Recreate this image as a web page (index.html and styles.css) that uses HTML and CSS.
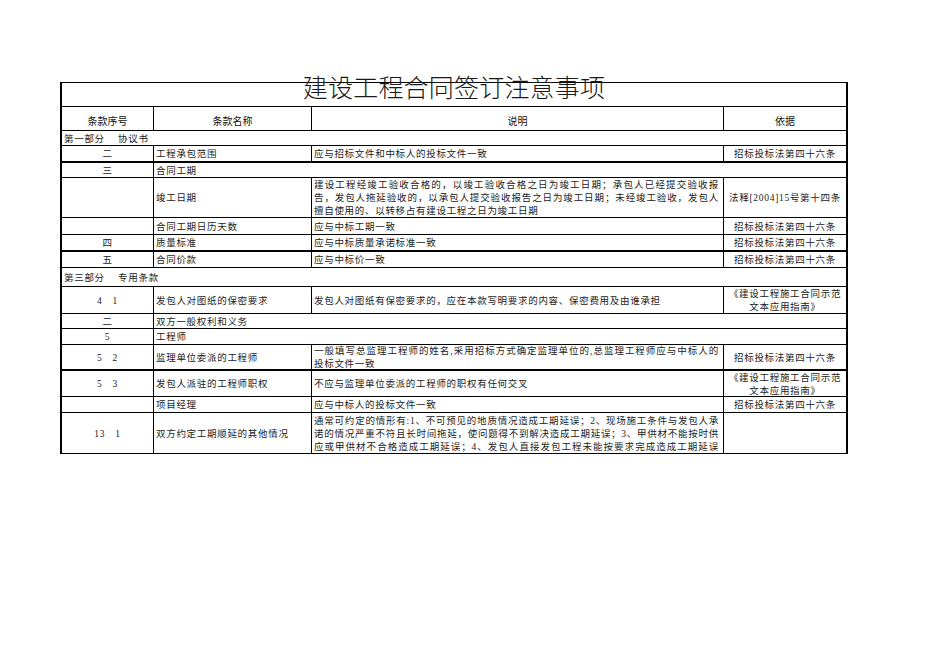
FILE: index.html
```html
<!DOCTYPE html>
<html lang="zh-CN">
<head>
<meta charset="utf-8">
<title>建设工程合同签订注意事项</title>
<link rel="stylesheet" href="styles.css">
</head>
<body>
<div class="page">
  <h1 class="title">建设工程合同签订注意事项</h1>
  <div class="sheet">
    <div class="cell span4"></div>

    <div class="cell hd">条款序号</div>
    <div class="cell hd">条款名称</div>
    <div class="cell hd">说明</div>
    <div class="cell hd last">依据</div>

    <div class="cell span4 sec">第一部分&nbsp;　协议书</div>

    <div class="cell num thick">二</div>
    <div class="cell name thick">工程承包范围</div>
    <div class="cell desc thick">应与招标文件和中标人的投标文件一致</div>
    <div class="cell basis last thick">招标投标法第四十六条</div>

    <div class="cell num">三</div>
    <div class="cell name span3">合同工期</div>

    <div class="cell num"></div>
    <div class="cell name">竣工日期</div>
    <div class="cell desc">
      <div class="lines">
        <span class="jl">建设工程经竣工验收合格的，以竣工验收合格之日为竣工日期；承包人已经提交验收报</span>
        <span class="jl">告，发包人拖延验收的，以承包人提交验收报告之日为竣工日期；未经竣工验收，发包人</span>
        <span class="ln">擅自使用的、以转移占有建设工程之日为竣工日期</span>
      </div>
    </div>
    <div class="cell basis last">法释[2004]15号第十四条</div>

    <div class="cell num"></div>
    <div class="cell name">合同工期日历天数</div>
    <div class="cell desc">应与中标工期一致</div>
    <div class="cell basis last">招标投标法第四十六条</div>

    <div class="cell num thick">四</div>
    <div class="cell name thick">质量标准</div>
    <div class="cell desc thick">应与中标质量承诺标准一致</div>
    <div class="cell basis last thick">招标投标法第四十六条</div>

    <div class="cell num">五</div>
    <div class="cell name">合同价款</div>
    <div class="cell desc">应与中标价一致</div>
    <div class="cell basis last">招标投标法第四十六条</div>

    <div class="cell span4 sec">第三部分&nbsp;　专用条款</div>

    <div class="cell num">4　1</div>
    <div class="cell name">发包人对图纸的保密要求</div>
    <div class="cell desc">发包人对图纸有保密要求的，应在本款写明要求的内容、保密费用及由谁承担</div>
    <div class="cell basis last">《建设工程施工合同示范文本应用指南》</div>

    <div class="cell num">二</div>
    <div class="cell name span3">双方一般权利和义务</div>

    <div class="cell num">5</div>
    <div class="cell name span3">工程师</div>

    <div class="cell num thick">5　2</div>
    <div class="cell name thick">监理单位委派的工程师</div>
    <div class="cell desc thick">
      <div class="lines">
        <span class="jl">一般填写总监理工程师的姓名,采用招标方式确定监理单位的,总监理工程师应与中标人的</span>
        <span class="ln">投标文件一致</span>
      </div>
    </div>
    <div class="cell basis last thick">招标投标法第四十六条</div>

    <div class="cell num">5　3</div>
    <div class="cell name">发包人派驻的工程师职权</div>
    <div class="cell desc">不应与监理单位委派的工程师的职权有任何交叉</div>
    <div class="cell basis last">《建设工程施工合同示范文本应用指南》</div>

    <div class="cell num"></div>
    <div class="cell name">项目经理</div>
    <div class="cell desc">应与中标人的投标文件一致</div>
    <div class="cell basis last">招标投标法第四十六条</div>

    <div class="cell num">13　1</div>
    <div class="cell name">双方约定工期顺延的其他情况</div>
    <div class="cell desc">
      <div class="lines">
        <span class="jl">通常可约定的情形有:1、不可预见的地质情况造成工期延误；2、现场施工条件与发包人承</span>
        <span class="jl">诺的情况严重不符且长时间拖延，使问题得不到解决造成工期延误；3、甲供材不能按时供</span>
        <span class="jl">应或甲供材不合格造成工期延误；4、发包人直接发包工程未能按要求完成造成工期延误</span>
      </div>
    </div>
    <div class="cell basis last"></div>
  </div>
</div>
</body>
</html>
```

FILE: styles.css
```css
html, body {
  margin: 0;
  padding: 0;
  background: #ffffff;
}

.page {
  padding: 72px 0 0 60px;
}

.title {
  margin: 0;
  width: 788px;
  height: 28px;
  font-family: "Noto Sans CJK SC", sans-serif;
  font-weight: 300;
  font-size: 25px;
  line-height: 28px;
  letter-spacing: 0.2px;
  text-align: center;
  color: #1a1a1a;
}

.sheet {
  margin-top: -18px;
  display: grid;
  grid-template-columns: 92px 158px 412px 124px;
  grid-template-rows: 24px 24px 15px 17px 15px 40px 17px 17px 16px 19px 27px 15px 16px 26px 26px 16px 41px;
  width: 788px;
  box-sizing: border-box;
  border-top: 1px solid #000000;
  border-left: 2px solid #000000;
}

.cell {
  box-sizing: border-box;
  min-width: 0;
  overflow: hidden;
  display: flex;
  align-items: center;
  padding: 2px 2px 0 2px;
  border-right: 1px solid #000000;
  border-bottom: 1px solid #000000;
  font-family: "Liberation Serif", "Noto Sans CJK SC", serif;
  font-size: 9.5px;
  line-height: 13px;
  letter-spacing: 0.7px;
  color: #222222;
  white-space: nowrap;
}

.thick {
  border-bottom-width: 2px;
}

.last {
  border-right-width: 2px;
}

.span4 {
  grid-column: 1 / span 4;
  border-right-width: 2px;
}

.span3 {
  grid-column: 2 / span 3;
  border-right-width: 2px;
}

.hd {
  justify-content: center;
  padding-top: 3px;
  font-family: "Noto Sans CJK SC", sans-serif;
  font-size: 10px;
  letter-spacing: 0;
  color: #111111;
}

.sec {
  padding-left: 2px;
}

.num {
  justify-content: center;
}

.name {
  padding-left: 2px;
}

.desc {
  padding-left: 2px;
  padding-right: 4px;
}

.lines {
  width: 100%;
}

.jl {
  display: block;
  text-align: justify;
  text-align-last: justify;
  white-space: nowrap;
}

.ln {
  display: block;
  white-space: nowrap;
}

.basis {
  justify-content: center;
  text-align: center;
  white-space: normal;
  padding-left: 1px;
  padding-right: 1px;
}
```
